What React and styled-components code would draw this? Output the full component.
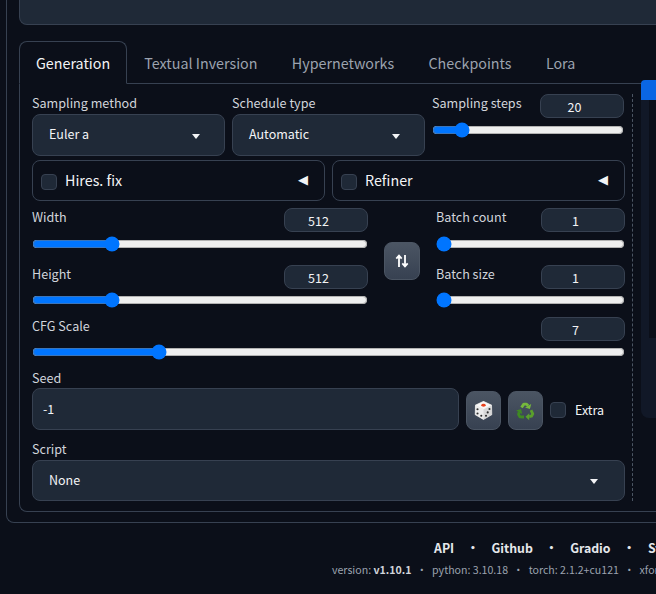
import React from "react";
import styled, { createGlobalStyle } from "styled-components";

const GlobalStyle = createGlobalStyle`
  html, body {
    margin: 0;
    padding: 0;
    background: #0b0f19;
  }
  * {
    box-sizing: border-box;
  }
`;

const Page = styled.div`
  width: 656px;
  height: 594px;
  overflow: hidden;
  padding-left: 6px;
  background: #0b0f19;
  color: #f3f4f6;
  font-family: "Noto Sans CJK SC", "Noto Sans", sans-serif;
  font-size: 12.5px;
`;

const Frame = styled.div`
  width: 800px;
  height: 523px;
  padding-left: 12px;
  border-left: 1px solid #374151;
  border-bottom: 1px solid #374151;
  border-bottom-left-radius: 8px;
`;

const PromptStub = styled.div`
  height: 25px;
  margin-bottom: 16px;
  background: #1f2937;
  border: 1px solid #374151;
  border-top: 0;
  border-bottom-left-radius: 8px;
`;

const TabBar = styled.div`
  display: flex;
  height: 43px;
  border-bottom: 1px solid #374151;
`;

const Tab = styled.div`
  height: ${({ $active }) => ($active ? "43px" : "42px")};
  padding: 0 ${({ $active }) => ($active ? "16px" : "17.2px")};
  line-height: ${({ $active }) => ($active ? "41px" : "43px")};
  font-size: 14.3px;
  color: ${({ $active }) => ($active ? "#f3f4f6" : "#9ca3af")};
  background: #0b0f19;
  ${({ $active }) =>
    $active &&
    `
    border: 1px solid #374151;
    border-bottom: 1px solid #0b0f19;
    border-radius: 8px 8px 0 0;
  `}
`;

const TabBody = styled.div`
  display: flex;
  height: 428px;
  padding: 10px 0 10px 12px;
  border-left: 1px solid #374151;
  border-bottom: 1px solid #374151;
  border-bottom-left-radius: 8px;
`;

const Controls = styled.div`
  display: flex;
  flex-direction: column;
  width: 593px;
  flex: none;
`;

const Side = styled.div`
  flex: none;
  width: 24px;
  margin-left: 7px;
  border-left: 1px dashed #4b5563;
`;

const SideHandle = styled.div`
  width: 15px;
  height: 20px;
  margin: -14px 0 0 8px;
  background: #0a66e4;
  border-radius: 4px 0 0 0;
`;

const SidePanel = styled.div`
  width: 15px;
  height: 318px;
  margin-left: 8px;
  padding-left: 8px;
  background: #111827;
  border-radius: 0 0 0 8px;
`;

const SideInner = styled.div`
  height: 238px;
  background: #0b0f19;
`;

const TopRow = styled.div`
  display: flex;
  gap: 7px;
  height: 62px;
`;

const SelectField = styled.div`
  width: 193px;
`;

const Label = styled.div`
  font-size: 12.6px;
  line-height: 18px;
  color: #d1d5db;
`;

const SelectBox = styled.div`
  display: flex;
  align-items: center;
  justify-content: space-between;
  height: ${({ $wide }) => ($wide ? "41px" : "42px")};
  margin-top: 2px;
  padding: 0 ${({ $wide }) => ($wide ? "26px 2px" : "24px 4px")} 16px;
  background: #1f2937;
  border: 1px solid #374151;
  border-radius: 8px;
  font-size: 12.5px;
  color: #f3f4f6;
`;

const Caret = styled.svg`
  width: 8px;
  height: 5px;
  margin-top: ${({ $wide }) => ($wide ? "3px" : "6px")};
  fill: #f3f4f6;
`;

const StepsField = styled.div`
  flex: none;
  width: 192px;
`;

const SliderHead = styled.div`
  display: flex;
  justify-content: space-between;
  align-items: flex-start;
`;

const NumberBox = styled.div`
  width: 84px;
  height: 24px;
  padding-right: 15px;
  line-height: 23px;
  text-align: center;
  font-size: 12.5px;
  background: #1f2937;
  border: 1px solid #374151;
  border-radius: 8px;
  color: #f3f4f6;
`;

const Range = styled.input.attrs({ type: "range" })`
  display: block;
  width: 100%;
  height: 16px;
  margin: ${({ $drop }) => $drop}px 0 0;
  padding: 0 1px 0 0;
`;

const AccordionRow = styled.div`
  display: flex;
  gap: 7px;
  margin-top: 4px;
`;

const Accordion = styled.div`
  display: flex;
  align-items: center;
  justify-content: space-between;
  width: 293px;
  height: 41px;
  padding: 0 16px 0 8px;
  border: 1px solid #374151;
  border-radius: 8px;
`;

const Check = styled.span`
  display: block;
  width: 16px;
  height: 16px;
  background: #1f2937;
  border: 1px solid #374151;
  border-radius: 4px;
`;

const CheckGroup = styled.div`
  display: flex;
  align-items: center;
  gap: 8px;
  padding-bottom: 3px;
  font-size: 14.3px;
  color: #f3f4f6;

  ${Check} {
    margin-top: 6px;
  }
`;

const Arrow = styled.span`
  margin-bottom: 2px;
  font-family: "DejaVu Sans", sans-serif;
  font-size: 13px;
  line-height: 1;
  color: #f3f4f6;
`;

const Sizes = styled.div`
  display: flex;
  margin-top: 7px;
`;

const SizeColumn = styled.div`
  flex: none;
  width: ${({ $narrow }) => ($narrow ? "189px" : "336px")};
`;

const SliderBlock = styled.div`
  margin-top: ${({ $gap }) => $gap ?? 0}px;
`;

const SwapCell = styled.div`
  flex: none;
  width: 68px;
  padding: 34px 0 0 16px;
`;

const ToolButton = styled.div`
  display: flex;
  align-items: center;
  justify-content: center;
  flex: none;
  width: ${({ $w }) => $w}px;
  height: ${({ $h }) => $h}px;
  background: linear-gradient(to bottom, #4b5563, #374151);
  border: 1px solid #4b5563;
  border-radius: 8px;
`;

const SeedRow = styled.div`
  display: flex;
  align-items: flex-end;
  margin-top: 1px;
`;

const SeedBox = styled.div`
  display: flex;
  align-items: center;
  width: 427px;
  height: 42px;
  padding: 0 0 1px 10px;
  background: #1f2937;
  border: 1px solid #374151;
  border-radius: 8px;
  font-size: 12.5px;
  color: #f3f4f6;
`;

const SeedTools = styled.div`
  display: flex;
  align-items: center;
  gap: 7px;
  margin-left: 7px;
`;

const ExtraCheck = styled(CheckGroup)`
  font-size: 12.5px;
  gap: 9px;
  padding-bottom: 2px;

  ${Check} {
    margin-top: 1px;
  }
`;

const ScriptField = styled.div`
  margin-top: 10px;
`;

const Footer = styled.div`
  padding: 15px 0 0 428px;
  white-space: nowrap;
`;

const FooterLinks = styled.div`
  display: flex;
  font-size: 12.3px;
  line-height: 20px;
  font-weight: 700;
  color: #e5e7eb;
`;

const Dot = styled.span`
  margin: 0 ${({ $m }) => $m}px;
`;

const Versions = styled.div`
  margin: 2px 0 0 -102px;
  font-size: 10.6px;
  line-height: 20px;
  color: #9ca3af;

  b {
    font-weight: 700;
    color: #d1d5db;
  }
`;

const CaretIcon = ({ wide }) => (
  <Caret $wide={wide} viewBox="0 0 8 5">
    <path d="M0 0h8L4 5z" />
  </Caret>
);

const SwapIcon = () => (
  <svg width="14" height="14" viewBox="0 0 14 14" fill="none" stroke="#fff" strokeWidth="1.8">
    <path d="M4 13V2M1.3 4.6 4 1.6l2.7 3" />
    <path d="M10 1v11M7.3 9.4l2.7 3 2.7-3" />
  </svg>
);

const DiceIcon = () => (
  <svg width="21" height="21" viewBox="0 0 20 20">
    <path d="M10 1.5 17.6 5l.2 8.8-7.8 4.7-7.8-4.7.2-8.8z" fill="#d8d8d8" stroke="#d8d8d8" strokeLinejoin="round" />
    <path d="M10 1.5 17.6 5 10 8.8 2.4 5z" fill="#f7f7f7" />
    <path d="M10 8.8v9.7l-7.8-4.7.2-8.8z" fill="#ececec" />
    <ellipse cx="10" cy="5" rx="2.1" ry="1.4" fill="#e8401c" />
    <circle cx="4.3" cy="8.8" r="1" fill="#2e2e2e" />
    <circle cx="7.9" cy="15" r="1" fill="#2e2e2e" />
    <circle cx="4.3" cy="12.9" r="1" fill="#2e2e2e" />
    <circle cx="15.7" cy="8.6" r="1" fill="#2e2e2e" />
    <circle cx="12.4" cy="15" r="1" fill="#2e2e2e" />
    <circle cx="14" cy="11.8" r="1" fill="#2e2e2e" />
  </svg>
);

const RecycleArrow = ({ turn, color }) => (
  <g transform={`rotate(${turn} 10 11)`}>
    <path d="M6.2 7.2 8.4 3.9H11l1.5 1.6" fill="none" stroke={color} strokeWidth="2.7" strokeLinejoin="round" />
    <path d="M15.4 3.8 14.2 8.6 9.6 7.1z" fill={color} />
  </g>
);

const RecycleIcon = () => (
  <svg width="21" height="21" viewBox="0 0 20 20">
    <RecycleArrow turn={0} color="#76b83c" />
    <RecycleArrow turn={120} color="#5a9f2c" />
    <RecycleArrow turn={240} color="#3f8a22" />
  </svg>
);

const NumberSlider = ({ label, value, max, min = 1, gap, drop = 4 }) => (
  <SliderBlock $gap={gap}>
    <SliderHead>
      <Label>{label}</Label>
      <NumberBox>{value}</NumberBox>
    </SliderHead>
    <Range $drop={drop} min={min} max={max} defaultValue={value} />
  </SliderBlock>
);

export default function App() {
  return (
    <Page>
      <GlobalStyle />
      <Frame>
        <PromptStub />
        <TabBar>
          <Tab $active>Generation</Tab>
          <Tab>Textual Inversion</Tab>
          <Tab>Hypernetworks</Tab>
          <Tab>Checkpoints</Tab>
          <Tab>Lora</Tab>
        </TabBar>
        <TabBody>
          <Controls>
            <TopRow>
              <SelectField>
                <Label>Sampling method</Label>
                <SelectBox>
                  Euler a
                  <CaretIcon />
                </SelectBox>
              </SelectField>
              <SelectField>
                <Label>Schedule type</Label>
                <SelectBox>
                  Automatic
                  <CaretIcon />
                </SelectBox>
              </SelectField>
              <StepsField>
                <NumberSlider label="Sampling steps" value={20} max={150} />
              </StepsField>
            </TopRow>
            <AccordionRow>
              <Accordion>
                <CheckGroup>
                  <Check />
                  Hires. fix
                </CheckGroup>
                <Arrow>◀</Arrow>
              </Accordion>
              <Accordion>
                <CheckGroup>
                  <Check />
                  Refiner
                </CheckGroup>
                <Arrow>◀</Arrow>
              </Accordion>
            </AccordionRow>
            <Sizes>
              <SizeColumn>
                <NumberSlider label="Width" value={512} min={64} max={2048} />
                <NumberSlider label="Height" value={512} min={64} max={2048} gap={13} drop={3} />
              </SizeColumn>
              <SwapCell>
                <ToolButton $w={36} $h={38}>
                  <SwapIcon />
                </ToolButton>
              </SwapCell>
              <SizeColumn $narrow>
                <NumberSlider label="Batch count" value={1} max={100} />
                <NumberSlider label="Batch size" value={1} max={8} gap={13} drop={3} />
              </SizeColumn>
            </Sizes>
            <NumberSlider label="CFG Scale" value={7} max={30} gap={9} drop={3} />
            <SliderBlock $gap={9}>
              <Label>Seed</Label>
            </SliderBlock>
            <SeedRow>
              <SeedBox>-1</SeedBox>
              <SeedTools>
                <ToolButton $w={35} $h={39}>
                  <DiceIcon />
                </ToolButton>
                <ToolButton $w={35} $h={39}>
                  <RecycleIcon />
                </ToolButton>
                <ExtraCheck>
                  <Check />
                  Extra
                </ExtraCheck>
              </SeedTools>
            </SeedRow>
            <ScriptField>
              <Label>Script</Label>
              <SelectBox $wide>
                None
                <CaretIcon wide />
              </SelectBox>
            </ScriptField>
          </Controls>
          <Side>
            <SideHandle />
            <SidePanel>
              <SideInner />
            </SidePanel>
          </Side>
        </TabBody>
      </Frame>
      <Footer>
        <FooterLinks>
          API<Dot $m={12.5}>•</Dot>Github<Dot $m={12.5}>•</Dot>Gradio<Dot $m={12.5}>•</Dot>Startup profile
        </FooterLinks>
        <Versions>
          version: <b>v1.10.1</b>
          <Dot $m={5}>•</Dot>python: 3.10.18<Dot $m={5}>•</Dot>torch: 2.1.2+cu121<Dot $m={5}>•</Dot>xformers: N/A
        </Versions>
      </Footer>
    </Page>
  );
}
